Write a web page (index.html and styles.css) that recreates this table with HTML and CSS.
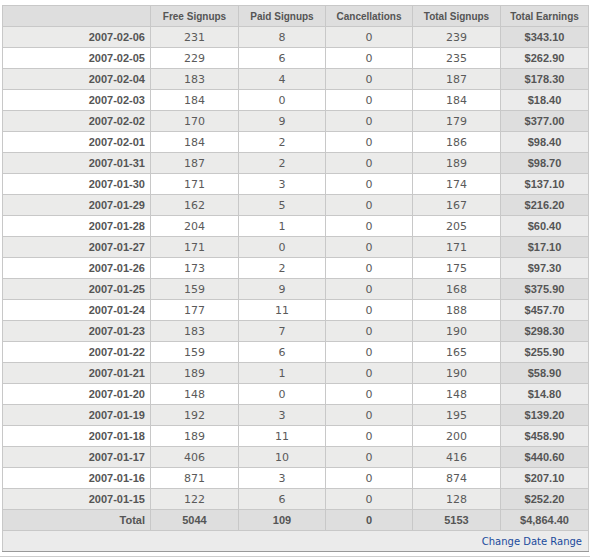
FILE: index.html
```html
<!DOCTYPE html>
<html>
<head>
<meta charset="utf-8">
<link rel="stylesheet" href="styles.css">
</head>
<body>
<div class="wrap">
<table class="stats">
<colgroup>
<col class="c-date"><col class="c-88"><col class="c-87"><col class="c-87"><col class="c-88"><col class="c-88">
</colgroup>
<thead>
<tr><th></th><th>Free Signups</th><th>Paid Signups</th><th>Cancellations</th><th>Total Signups</th><th>Total Earnings</th></tr>
</thead>
<tbody>
<tr class="odd"><td class="d">2007-02-06</td><td>231</td><td>8</td><td>0</td><td>239</td><td class="e">$343.10</td></tr>
<tr><td class="d">2007-02-05</td><td>229</td><td>6</td><td>0</td><td>235</td><td class="e">$262.90</td></tr>
<tr class="odd"><td class="d">2007-02-04</td><td>183</td><td>4</td><td>0</td><td>187</td><td class="e">$178.30</td></tr>
<tr><td class="d">2007-02-03</td><td>184</td><td>0</td><td>0</td><td>184</td><td class="e">$18.40</td></tr>
<tr class="odd"><td class="d">2007-02-02</td><td>170</td><td>9</td><td>0</td><td>179</td><td class="e">$377.00</td></tr>
<tr><td class="d">2007-02-01</td><td>184</td><td>2</td><td>0</td><td>186</td><td class="e">$98.40</td></tr>
<tr class="odd"><td class="d">2007-01-31</td><td>187</td><td>2</td><td>0</td><td>189</td><td class="e">$98.70</td></tr>
<tr><td class="d">2007-01-30</td><td>171</td><td>3</td><td>0</td><td>174</td><td class="e">$137.10</td></tr>
<tr class="odd"><td class="d">2007-01-29</td><td>162</td><td>5</td><td>0</td><td>167</td><td class="e">$216.20</td></tr>
<tr><td class="d">2007-01-28</td><td>204</td><td>1</td><td>0</td><td>205</td><td class="e">$60.40</td></tr>
<tr class="odd"><td class="d">2007-01-27</td><td>171</td><td>0</td><td>0</td><td>171</td><td class="e">$17.10</td></tr>
<tr><td class="d">2007-01-26</td><td>173</td><td>2</td><td>0</td><td>175</td><td class="e">$97.30</td></tr>
<tr class="odd"><td class="d">2007-01-25</td><td>159</td><td>9</td><td>0</td><td>168</td><td class="e">$375.90</td></tr>
<tr><td class="d">2007-01-24</td><td>177</td><td>11</td><td>0</td><td>188</td><td class="e">$457.70</td></tr>
<tr class="odd"><td class="d">2007-01-23</td><td>183</td><td>7</td><td>0</td><td>190</td><td class="e">$298.30</td></tr>
<tr><td class="d">2007-01-22</td><td>159</td><td>6</td><td>0</td><td>165</td><td class="e">$255.90</td></tr>
<tr class="odd"><td class="d">2007-01-21</td><td>189</td><td>1</td><td>0</td><td>190</td><td class="e">$58.90</td></tr>
<tr><td class="d">2007-01-20</td><td>148</td><td>0</td><td>0</td><td>148</td><td class="e">$14.80</td></tr>
<tr class="odd"><td class="d">2007-01-19</td><td>192</td><td>3</td><td>0</td><td>195</td><td class="e">$139.20</td></tr>
<tr><td class="d">2007-01-18</td><td>189</td><td>11</td><td>0</td><td>200</td><td class="e">$458.90</td></tr>
<tr class="odd"><td class="d">2007-01-17</td><td>406</td><td>10</td><td>0</td><td>416</td><td class="e">$440.60</td></tr>
<tr><td class="d">2007-01-16</td><td>871</td><td>3</td><td>0</td><td>874</td><td class="e">$207.10</td></tr>
<tr class="odd"><td class="d">2007-01-15</td><td>122</td><td>6</td><td>0</td><td>128</td><td class="e">$252.20</td></tr>
<tr class="total"><td class="d">Total</td><td>5044</td><td>109</td><td>0</td><td>5153</td><td class="e">$4,864.40</td></tr>
</tbody>
<tfoot>
<tr><td colspan="6" class="foot"><a href="#" class="range">Change Date Range</a></td></tr>
</tfoot>
</table>
</div>
<div class="sep"></div>
</body>
</html>
```
FILE: styles.css
```css
html, body {
  margin: 0;
  padding: 0;
  background: #ffffff;
}
body {
  font-family: "DejaVu Sans", Verdana, sans-serif;
  font-size: 11px;
  color: #555555;
}
.wrap {
  padding: 5px 2px 0 2px;
}
.stats {
  width: 586px;
  table-layout: fixed;
  border-collapse: collapse;
  border: 1px solid #c8c8c8;
}
.c-date { width: 148px; }
.c-88 { width: 88px; }
.c-87 { width: 87px; }
.stats th,
.stats td {
  height: 20px;
  padding: 0 5px;
  border: 1px solid #c8c8c8;
  text-align: center;
  vertical-align: middle;
  white-space: nowrap;
  overflow: hidden;
}
.stats th {
  background: #dedede;
  font-family: "Liberation Sans", Arial, sans-serif;
  font-size: 10px;
  font-weight: bold;
  color: #555555;
}
.stats td {
  font-family: "DejaVu Sans", Verdana, sans-serif;
  font-size: 11px;
  color: #5a5a5a;
  background: #ffffff;
}
.stats tr.odd td {
  background: #ebebea;
}
.stats td.d {
  text-align: right;
  font-family: "Liberation Sans", Arial, sans-serif;
  font-size: 11px;
  font-weight: bold;
  color: #555555;
}
.stats td.e {
  font-family: "Liberation Sans", Arial, sans-serif;
  font-size: 11px;
  font-weight: bold;
  color: #555555;
  background: #ebebeb;
}
.stats tr.odd td.e {
  background: #dedede;
}
.stats tr.total td {
  background: #dedede;
  font-family: "Liberation Sans", Arial, sans-serif;
  font-size: 11px;
  font-weight: bold;
  color: #555555;
}
.stats td.foot {
  background: #ebebeb;
  text-align: right;
  padding-right: 6px;
  border-bottom: 1px solid #999999;
}
.range {
  font-family: "DejaVu Sans", Verdana, sans-serif;
  font-size: 10px;
  color: #1a4a9c;
  text-decoration: none;
}
.sep {
  margin-top: 4px;
  border-top: 1px solid #cccccc;
}
```
